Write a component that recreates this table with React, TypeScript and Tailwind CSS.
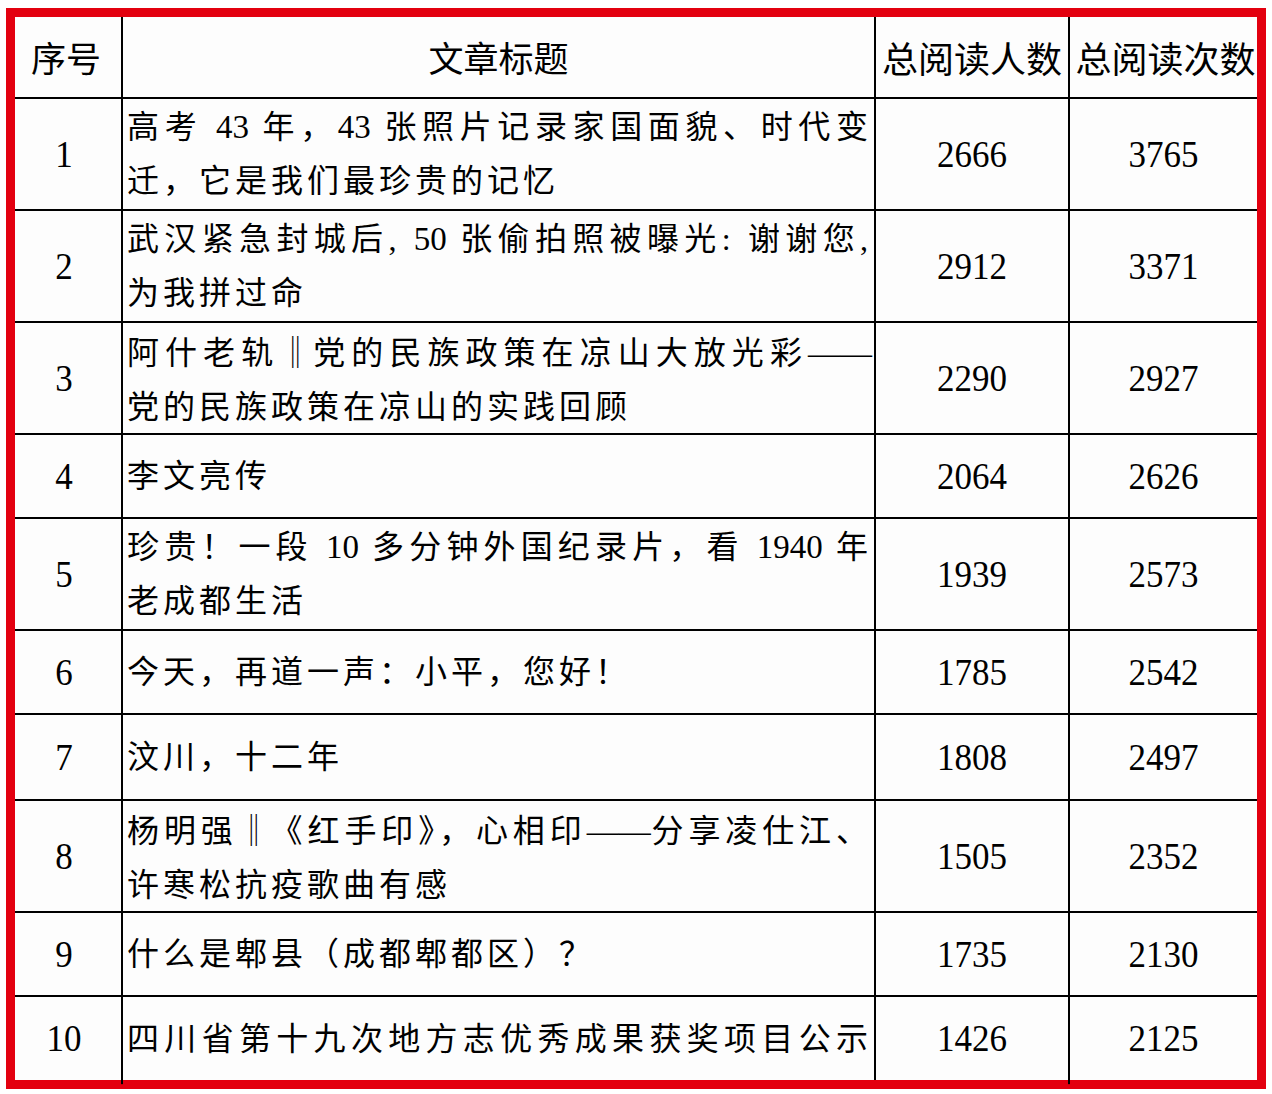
import React from "react";

type Row = {
  no: string;
  lines: string[];
  readers: string;
  reads: string;
  height: string;
};

const rows: Row[] = [
  {
    no: "1",
    lines: ["高考 43 年，43 张照片记录家国面貌、时代变", "迁，它是我们最珍贵的记忆"],
    readers: "2666",
    reads: "3765",
    height: "h-[112px]",
  },
  {
    no: "2",
    lines: ["武汉紧急封城后, 50 张偷拍照被曝光: 谢谢您,", "为我拼过命"],
    readers: "2912",
    reads: "3371",
    height: "h-[112px]",
  },
  {
    no: "3",
    lines: ["阿什老轨‖党的民族政策在凉山大放光彩——", "党的民族政策在凉山的实践回顾"],
    readers: "2290",
    reads: "2927",
    height: "h-[112px]",
  },
  { no: "4", lines: ["李文亮传"], readers: "2064", reads: "2626", height: "h-[84px]" },
  {
    no: "5",
    lines: ["珍贵！一段 10 多分钟外国纪录片，看 1940 年", "老成都生活"],
    readers: "1939",
    reads: "2573",
    height: "h-[112px]",
  },
  { no: "6", lines: ["今天，再道一声：小平，您好！"], readers: "1785", reads: "2542", height: "h-[84px]" },
  { no: "7", lines: ["汶川，十二年"], readers: "1808", reads: "2497", height: "h-[86px]" },
  {
    no: "8",
    lines: ["杨明强‖《红手印》，心相印——分享凌仕江、", "许寒松抗疫歌曲有感"],
    readers: "1505",
    reads: "2352",
    height: "h-[112px]",
  },
  { no: "9", lines: ["什么是郫县（成都郫都区）？"], readers: "1735", reads: "2130", height: "h-[84px]" },
  {
    no: "10",
    lines: ["四川省第十九次地方志优秀成果获奖项目公示"],
    readers: "1426",
    reads: "2125",
    height: "h-[83px]",
  },
];

const cjk = "font-['Liberation_Serif','Noto_Sans_CJK_SC',serif]";
const num = "font-['Liberation_Serif',serif] text-[35px] leading-none scale-y-110";
const head = "font-['Noto_Sans_CJK_SC',sans-serif] font-normal whitespace-nowrap";

// digits keep tight spacing, ‖ comes from the CJK font, dashes join into one rule
function TitleLine({ text }: { text: string }) {
  const parts = text.split(/(\d+|‖|—+)/).filter(Boolean);
  return (
    <>
      {parts.map((p, k) => {
        if (/^\d+$/.test(p)) {
          return (
            <span key={k} className="tracking-normal text-[33px]">
              {p}
            </span>
          );
        }
        if (p === "‖") {
          return (
            <span key={k} className="font-['Noto_Sans_CJK_SC',sans-serif] tracking-normal">
              ‖
            </span>
          );
        }
        if (p.startsWith("—")) {
          return (
            <span key={k} className="tracking-normal">
              {p}
            </span>
          );
        }
        return <React.Fragment key={k}>{p}</React.Fragment>;
      })}
    </>
  );
}

export default function App() {
  return (
    <div className="h-[1094px] w-[1272px] bg-white pl-[6px] pt-[8px]">
      <div className="h-[1081px] w-[1260px] border-[9px] border-[#e3000f] bg-[#fdfdfd] text-black">
        {/* header */}
        <div className="grid h-[82px] grid-cols-[108px_753px_194px_1fr] border-b-2 border-black">
          <div className={`flex items-center justify-center border-r-2 border-black pr-1 text-[35px] ${head}`}>
            序号
          </div>
          <div className={`flex items-center justify-center border-r-2 border-black text-[35px] ${head}`}>
            文章标题
          </div>
          <div className={`flex items-center justify-center border-r-2 border-black text-[36px] ${head}`}>
            总阅读人数
          </div>
          <div className={`flex items-center justify-center overflow-hidden pl-1 text-[36px] ${head}`}>
            总阅读次数
          </div>
        </div>

        {rows.map((row, i) => (
          <div
            key={row.no}
            className={`grid grid-cols-[108px_753px_194px_1fr] ${row.height} ${
              i < rows.length - 1 ? "border-b-2 border-black" : ""
            }`}
          >
            <div className={`flex items-center justify-center border-r-2 border-black pr-2 ${num}`}>
              {row.no}
            </div>
            <div className={`flex flex-col justify-center border-r-2 border-black pl-[4px] pr-[2px] ${cjk} text-[32px] font-normal`}>
              {row.lines.map((line, j) => (
                <div
                  key={j}
                  className={`whitespace-nowrap leading-[54px] tracking-[4px] ${
                    j === 0 && (row.lines.length > 1 || row.no === "10")
                      ? "text-justify [text-align-last:justify]"
                      : ""
                  }`}
                >
                  <TitleLine text={line} />
                </div>
              ))}
            </div>
            <div className={`flex items-center justify-center border-r-2 border-black ${num}`}>
              {row.readers}
            </div>
            <div className={`flex items-center justify-center ${num}`}>{row.reads}</div>
          </div>
        ))}
      </div>
    </div>
  );
}
